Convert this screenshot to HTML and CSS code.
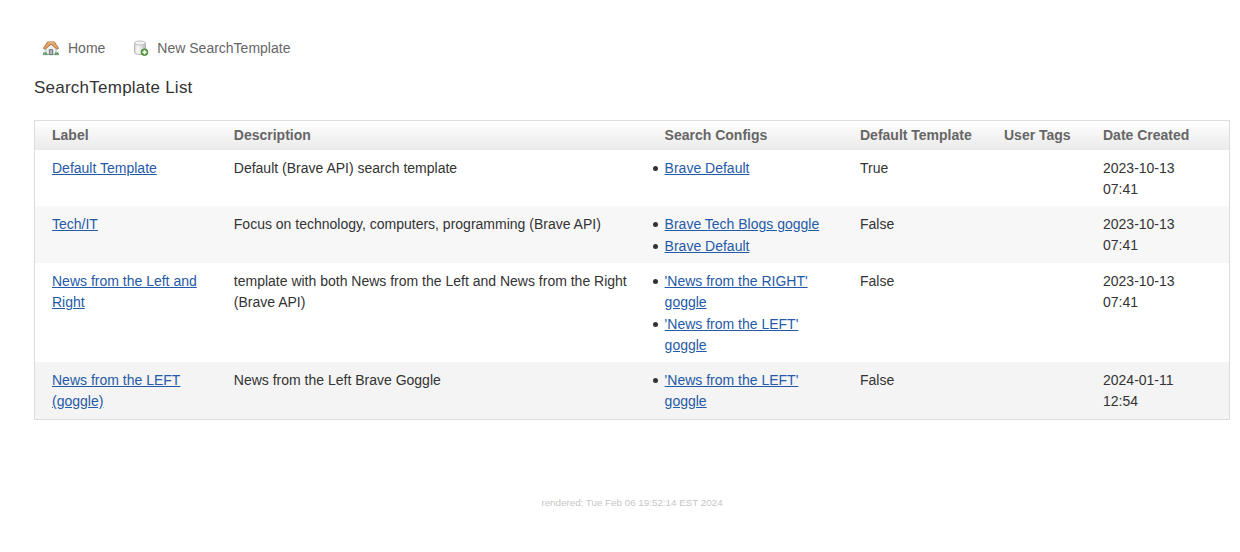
FILE: index.html
```html
<!DOCTYPE html>
<html lang="en">
<head>
<meta charset="utf-8">
<title>SearchTemplate List</title>
<link rel="stylesheet" href="styles.css">
</head>
<body>
<nav class="nav">
  <a class="nav-link" href="#">
    <svg class="icon" viewBox="0 0 16 16">
      <path d="M3 8l5-4.5L13 8v6.5H3z" fill="#eeeff0" stroke="#a5a7aa" stroke-width=".7"/>
      <path d="M6.3 9.5h3.4v5H6.3z" fill="#8b8e91" stroke="#62676a" stroke-width=".7"/>
      <path d="M7.4 10.3h1.2v4H7.4z" fill="#d0d4d6"/>
      <path d="M.4 8.3L4.6 1.9h6.8l4.2 6.4-1.5 1L8 4.2 1.9 9.3z" fill="#e2a565" stroke="#9c6632" stroke-width=".8" stroke-linejoin="round"/>
      <path d="M4.9 2.8h6.2" stroke="#f2c58b" stroke-width=".8"/>
      <path d="M0 14.6v-1.4l1.2-1.4 1.6.3 1.6 1.4v1.1zM11.5 14.6v-1.1l1.4-1.4 1.6-.2 1.5 1.5v1.2z" fill="#58a968"/>
      <path d="M1 12.7h1M13.3 12.7h1" stroke="#94d291"/>
      <path d="M0 14.7h4.5M5.7 14.7h4.6M11.5 14.7H16" stroke="#568263" stroke-width=".7"/>
    </svg>Home</a>
  <a class="nav-link" href="#">
    <svg class="icon" viewBox="0 0 16 16">
      <defs><linearGradient id="drum"><stop stop-color="#d2d2d2"/><stop offset=".3" stop-color="#fafafa"/><stop offset="1" stop-color="#bdbdbd"/></linearGradient></defs>
      <path d="M1.5 3v9.3c0 1.3 2.3 2.2 5.5 2.2s5.5-.9 5.5-2.2V3" fill="url(#drum)" stroke="#b0b0b0" stroke-width=".9"/>
      <ellipse cx="7" cy="3" rx="5.5" ry="2" fill="#f4f4f4" stroke="#b8b8b8" stroke-width=".9"/>
      <circle cx="11.5" cy="12.2" r="3.3" fill="#6aae4c" stroke="#397b25" stroke-width=".9"/>
      <path d="M11.5 10.2v4M9.5 12.2h4" stroke="#fff" stroke-width="1.5"/>
    </svg>New SearchTemplate</a>
</nav>
<main class="content">
  <h1 class="title">SearchTemplate List</h1>
  <table class="list">
    <colgroup>
      <col class="col-label"><col class="col-description"><col class="col-configs"><col class="col-default"><col class="col-tags"><col class="col-date">
    </colgroup>
    <thead>
      <tr><th>Label</th><th>Description</th><th>Search Configs</th><th>Default Template</th><th>User Tags</th><th>Date Created</th></tr>
    </thead>
    <tbody>
      <tr class="row-first">
        <td><a href="#">Default Template</a></td>
        <td>Default (Brave API) search template</td>
        <td><ul><li><a href="#">Brave Default</a></li></ul></td>
        <td>True</td><td></td><td>2023-10-13 07:41</td>
      </tr>
      <tr class="row-short">
        <td><a href="#">Tech/IT</a></td>
        <td>Focus on technology, computers, programming (Brave API)</td>
        <td><ul><li><a href="#">Brave Tech Blogs goggle</a></li><li><a href="#">Brave Default</a></li></ul></td>
        <td>False</td><td></td><td>2023-10-13 07:41</td>
      </tr>
      <tr class="row-tall">
        <td><a href="#">News from the Left and Right</a></td>
        <td>template with both News from the Left and News from the Right (Brave API)</td>
        <td><ul><li><a href="#">'News from the RIGHT' goggle</a></li><li><a href="#">'News from the LEFT' goggle</a></li></ul></td>
        <td>False</td><td></td><td>2023-10-13 07:41</td>
      </tr>
      <tr class="row-short row-last">
        <td><a href="#">News from the LEFT (goggle)</a></td>
        <td>News from the Left Brave Goggle</td>
        <td><ul><li><a href="#">'News from the LEFT' goggle</a></li></ul></td>
        <td>False</td><td></td><td>2024-01-11 12:54</td>
      </tr>
    </tbody>
  </table>
</main>
<footer class="footer">rendered: Tue Feb 06 19:52:14 EST 2024</footer>
</body>
</html>
```
FILE: styles.css
```css
body {
  margin: 0;
  background: #fff;
  color: #333;
  font: 14px/21px "Liberation Sans", Arial, sans-serif;
}
.nav {
  display: flex;
  gap: 28px;
  padding: 38px 0 0 43px;
}
.nav-link {
  display: flex;
  align-items: center;
  gap: 9px;
  color: #666;
  text-decoration: none;
}
.nav-link + .nav-link { gap: 8px; }
.icon {
  width: 16px;
  height: 16px;
  margin-bottom: 1px;
}
.content {
  padding: 18px 10px 0 34px;
}
.title {
  margin: 0 0 22px;
  font-size: 17px;
  font-weight: normal;
  letter-spacing: .24px;
  line-height: 21px;
}
.list {
  width: 1196px;
  table-layout: fixed;
  border: 1px solid #ddd;
  border-spacing: 0;
}
.col-label { width: 181.8px; }
.col-description { width: 430.8px; }
.col-configs { width: 195.4px; }
.col-default { width: 144px; }
.col-tags { width: 99px; }
th, td {
  padding: 0 17px;
  text-align: left;
  vertical-align: top;
}
th {
  height: 29px;
  padding-right: 0;
  color: #666;
  line-height: 28px;
  white-space: nowrap;
}
thead tr {
  background: linear-gradient(#fff, #eaeaea);
}
td {
  padding-top: 8px;
  padding-right: 18px;
}
.row-first { height: 56px; }
.row-short { height: 57px; }
.row-tall { height: 99px; }
.row-short { background: #f7f7f7; }
.row-last { background: #f4f4f4; }
.list a { color: #255aa8; }
ul {
  margin: 0;
  padding: 0;
  list-style: none;
}
li { position: relative; }
li + li { margin-top: 1px; }
li::before {
  content: "";
  position: absolute;
  left: -12px;
  top: 8px;
  width: 5px;
  height: 5px;
  border-radius: 50%;
  background: #333;
}
.footer {
  margin-top: 73px;
  padding-left: 24px;
  color: #c6c6c6;
  font-size: 9.8px;
  line-height: 20px;
  text-align: center;
}
```
